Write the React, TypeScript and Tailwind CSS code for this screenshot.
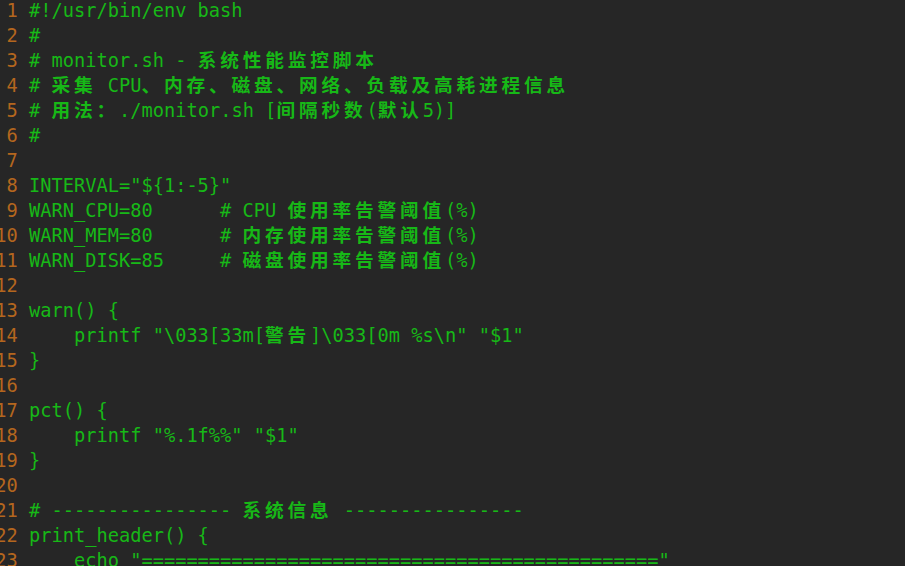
const lines: string[] = [
  '#!/usr/bin/env bash',
  '#',
  '# monitor.sh - 系统性能监控脚本',
  '# 采集 CPU、内存、磁盘、网络、负载及高耗进程信息',
  '# 用法：./monitor.sh [间隔秒数(默认5)]',
  '#',
  '',
  'INTERVAL="${1:-5}"',
  'WARN_CPU=80      # CPU 使用率告警阈值(%)',
  'WARN_MEM=80      # 内存使用率告警阈值(%)',
  'WARN_DISK=85     # 磁盘使用率告警阈值(%)',
  '',
  'warn() {',
  '    printf "\\033[33m[警告]\\033[0m %s\\n" "$1"',
  '}',
  '',
  'pct() {',
  '    printf "%.1f%%" "$1"',
  '}',
  '',
  '# ---------------- 系统信息 ----------------',
  'print_header() {',
  '    echo "' + '='.repeat(46) + '"',
]

function isWide(ch: string) {
  const c = ch.codePointAt(0) ?? 0
  return c >= 0x2e80
}

// terminal grid: ASCII one cell, CJK two cells
function Cells({ text }: { text: string }) {
  const out: React.ReactNode[] = []
  let buf = ''
  Array.from(text).forEach((ch, i) => {
    if (isWide(ch)) {
      if (buf) {
        out.push(buf)
        buf = ''
      }
      out.push(
        <span
          key={i}
          className="inline-block w-[22.5px] font-['Noto_Sans_CJK_SC',sans-serif] font-bold leading-[21.6px]"
        >
          {ch}
        </span>
      )
    } else {
      buf += ch
    }
  })
  if (buf) out.push(buf)
  return <>{out}</>
}

export default function App() {
  return (
    <div className="w-[905px] h-[566px] overflow-hidden bg-[#262626]">
      <div className="-mt-[2px] font-['DejaVu_Sans_Mono','Noto_Sans_CJK_SC',monospace] text-[18.68px] leading-[25px]">
        {lines.map((line, i) => (
          <div key={i} className="flex h-[25px] whitespace-pre">
            <span className="flex w-[29px] shrink-0 justify-end pr-[11.25px] text-[#b4661e]">
              {i + 1}
            </span>
            <span className="text-[#17b817]">
              <Cells text={line} />
            </span>
          </div>
        ))}
      </div>
    </div>
  )
}
